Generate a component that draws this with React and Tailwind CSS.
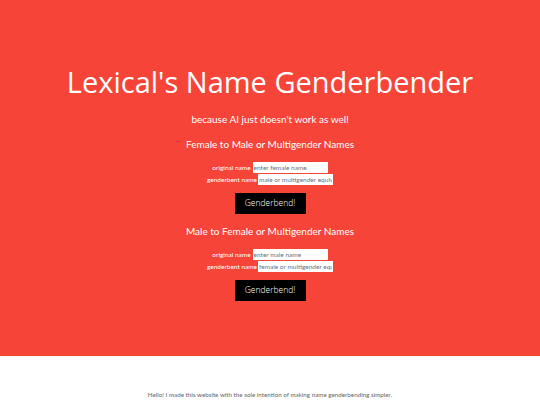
const Section = ({ title, ph1, ph2 }) => (
  <div className="flex flex-col items-center">
    <h2 className="text-[10px] leading-[13px] text-white">{title}</h2>
    <div className="mt-[11px] flex flex-col items-center gap-[1px] text-[6.5px] text-white">
      <div className="flex items-center gap-[2px]">
        <span>original name</span>
        <input
          className="w-[75px] h-[11px] bg-white px-[1px] text-[6.5px] text-gray-600 placeholder:text-gray-500 outline-none"
          placeholder={ph1}
        />
      </div>
      <div className="flex items-center gap-[1px]">
        <span>genderbent name</span>
        <input
          className="w-[75px] h-[11px] bg-white px-[1px] text-[6.5px] text-gray-600 placeholder:text-gray-500 outline-none"
          placeholder={ph2}
        />
      </div>
    </div>
    <button
      className="mt-[8px] w-[71px] h-[21px] bg-black text-white text-[8.5px]"
      style={{ fontFamily: '"Open Sans", sans-serif', fontWeight: 300 }}
    >
      Genderbend!
    </button>
  </div>
);

export default function App() {
  return (
    <div className="w-[540px] h-[405px] bg-white overflow-hidden" style={{ fontFamily: 'Lato, "Open Sans", sans-serif' }}>
      <div className="h-[356px] bg-[#f64538] flex flex-col items-center pt-[64px]">
        <h1
          className="text-[29px] leading-[36px] text-white"
          style={{ fontFamily: '"Open Sans", sans-serif' }}
        >
          Lexical's Name Genderbender
        </h1>
        <p className="mt-[13px] text-[10px] leading-[13px] text-white">because AI just doesn't work as well</p>
        <div className="mt-[12px]">
          <Section title="Female to Male or Multigender Names" ph1="enter female name" ph2="male or multigender equiv" />
        </div>
        <div className="mt-[11px]">
          <Section title="Male to Female or Multigender Names" ph1="enter male name" ph2="female or multigender equ" />
        </div>
      </div>
      <p className="mt-[34px] text-center text-[6.25px] text-[#666]">
        Hello! I made this website with the sole intention of making name genderbending simpler.
      </p>
    </div>
  );
}
